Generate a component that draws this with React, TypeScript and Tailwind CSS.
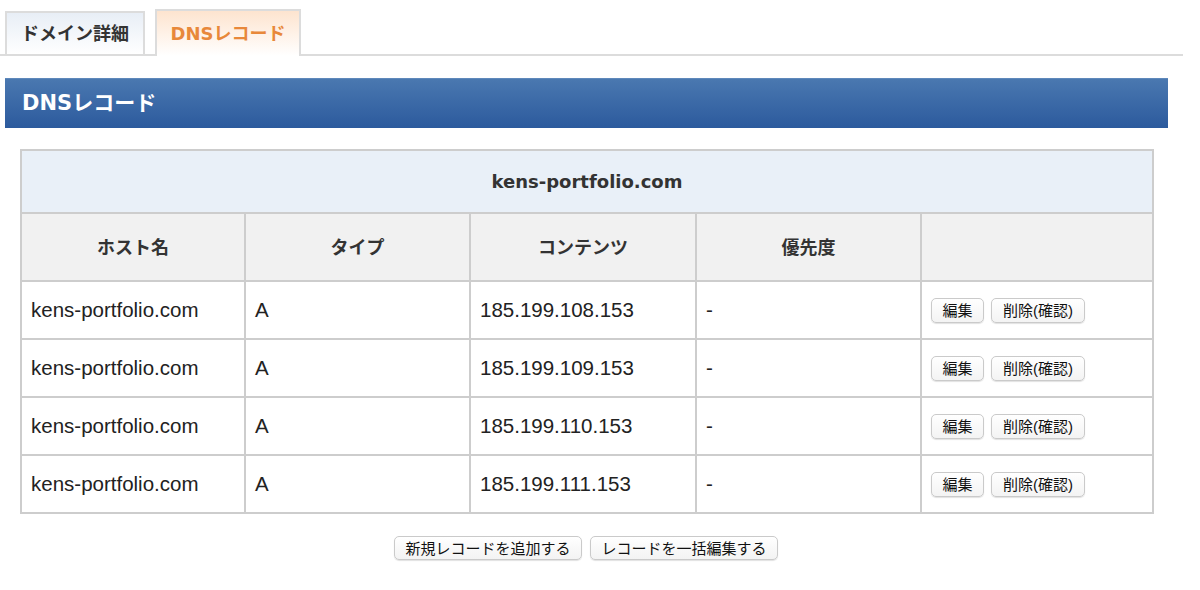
import React from 'react';

const rows = [
  { host: 'kens-portfolio.com', type: 'A', content: '185.199.108.153', prio: '-' },
  { host: 'kens-portfolio.com', type: 'A', content: '185.199.109.153', prio: '-' },
  { host: 'kens-portfolio.com', type: 'A', content: '185.199.110.153', prio: '-' },
  { host: 'kens-portfolio.com', type: 'A', content: '185.199.111.153', prio: '-' },
];

const jp = "font-['Liberation_Sans','Noto_Sans_CJK_JP',sans-serif]";
const bold = "font-['DejaVu_Sans','Noto_Sans_CJK_JP',sans-serif] font-bold";

const Btn = ({ children, className = '' }: { children: React.ReactNode; className?: string }) => (
  <button
    type="button"
    className={`rounded-[5px] border border-[#cacaca] bg-gradient-to-b from-white to-[#f3f3f3] leading-none text-[#111] shadow-[0_1px_1px_rgba(0,0,0,0.12)] ${jp} ${className}`}
  >
    {children}
  </button>
);

export default function App() {
  return (
    <div className={`w-[1200px] h-[590px] bg-white ${jp}`}>
      <div className="w-[1183px]">
        {/* タブ */}
        <div className="flex items-end gap-[10px] pl-[5px] pt-[9px] border-b-2 border-[#dcdcdc]">
          <div className={`w-[140px] h-[45px] -mb-[2px] flex items-center justify-center border-2 border-[#dcdcdc] bg-gradient-to-b from-[#e8eef6] to-white text-[18px] text-[#333] ${bold}`}>
            ドメイン詳細
          </div>
          <div className={`w-[146px] h-[47px] -mb-[2px] flex items-center justify-center border-2 border-b-0 border-[#dcdcdc] bg-gradient-to-b from-[#fde4cf] to-white text-[18px] text-[#e8883a] ${bold}`}>
            DNSレコード
          </div>
        </div>

        {/* 見出し */}
        <div className="ml-[5px] mt-[22px] w-[1163px] h-[50px] flex items-center pl-[17px] bg-gradient-to-b from-[#4a78b0] to-[#2c5a9d] border-t border-[#5e88bb]">
          <span className={`text-[21px] text-white ${bold}`}>DNSレコード</span>
        </div>

        {/* テーブル */}
        <table className="ml-[20px] mt-[21px] w-[1132px] border-collapse border-2 border-[#cdcdcd] table-fixed">
          <colgroup>
            <col className="w-[224px]" />
            <col className="w-[225px]" />
            <col className="w-[226px]" />
            <col className="w-[225px]" />
            <col className="w-[232px]" />
          </colgroup>
          <thead>
            <tr className="h-[63px] bg-[#e9f0f8]">
              <th colSpan={5} className={`border-2 border-[#cdcdcd] text-[18px] text-[#333] ${bold}`}>
                kens-portfolio.com
              </th>
            </tr>
            <tr className="h-[68px] bg-[#f1f1f1]">
              {['ホスト名', 'タイプ', 'コンテンツ', '優先度', ''].map((h, i) => (
                <th key={i} className={`border-2 border-[#cdcdcd] text-[18px] text-[#333] ${bold}`}>
                  {h}
                </th>
              ))}
            </tr>
          </thead>
          <tbody>
            {rows.map((r, i) => (
              <tr key={i} className="h-[58px] text-[20.5px] text-[#222]">
                <td className="border-2 border-[#cdcdcd] pl-[9px]">{r.host}</td>
                <td className="border-2 border-[#cdcdcd] pl-[9px]">{r.type}</td>
                <td className="border-2 border-[#cdcdcd] pl-[9px]">{r.content}</td>
                <td className="border-2 border-[#cdcdcd] pl-[9px]">{r.prio}</td>
                <td className="border-2 border-[#cdcdcd] pl-[9px]">
                  <div className="flex gap-[7px]">
                    <Btn className="w-[53px] h-[25px] text-[15px]">編集</Btn>
                    <Btn className="w-[94px] h-[25px] text-[15px]">削除(確認)</Btn>
                  </div>
                </td>
              </tr>
            ))}
          </tbody>
        </table>

        {/* 下部ボタン */}
        <div className="ml-[20px] w-[1132px] mt-[22px] flex justify-center gap-[8px]">
          <Btn className="w-[188px] h-[24px] text-[15px]">新規レコードを追加する</Btn>
          <Btn className="w-[188px] h-[24px] text-[15px]">レコードを一括編集する</Btn>
        </div>
      </div>
    </div>
  );
}
